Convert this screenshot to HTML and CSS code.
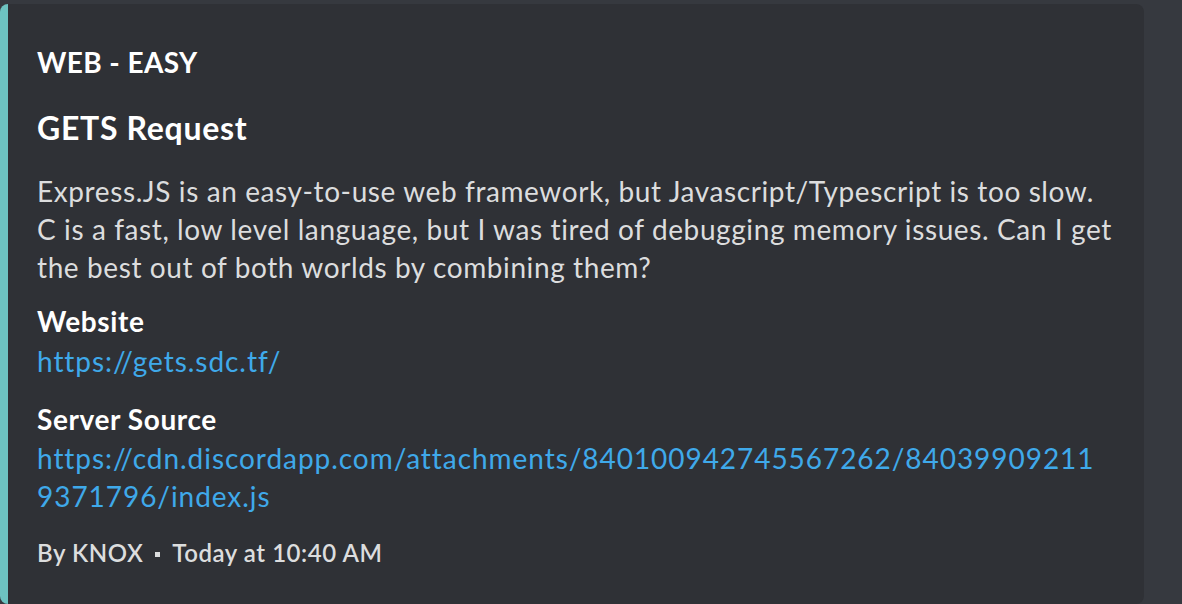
FILE: index.html
```html
<!DOCTYPE html>
<html>
<head>
<meta charset="utf-8">
<link rel="stylesheet" href="styles.css">
</head>
<body>
<div class="embed">
  <div class="author">WEB - EASY</div>
  <div class="title">GETS Request</div>
  <div class="desc">Express.JS is an easy-to-use web framework, but Javascript/Typescript is too slow.<br>C is a fast, low level language, but I was tired of debugging memory issues. Can I get<br>the best out of both worlds by combining them?</div>
  <div class="field">
    <div class="field-name">Website</div>
    <div class="field-value"><a class="link" href="#">https://gets.sdc.tf/</a></div>
  </div>
  <div class="field field-second">
    <div class="field-name">Server Source</div>
    <div class="field-value"><a class="link" href="#">https://cdn.discordapp.com/attachments/840100942745567262/84039909211<br>9371796/index.js</a></div>
  </div>
  <div class="footer">By KNOX<span class="sep"></span>Today at 10:40 AM</div>
</div>
</body>
</html>
```

FILE: styles.css
```css
html, body {
  margin: 0;
  padding: 0;
  background: #36393f;
  height: 604px;
  overflow: hidden;
}
body {
  font-family: Lato, "Open Sans", sans-serif;
  color: #dcddde;
}
.embed {
  box-sizing: border-box;
  margin-top: 4px;
  width: 1144px;
  height: 600px;
  background: #2f3136;
  border-left: 8px solid #6dc3c1;
  border-radius: 8px;
  padding: 40px 24px 0 29px;
}
.author {
  font-size: 28px;
  line-height: 36px;
  font-weight: 700;
  letter-spacing: 0.4px;
  color: #ffffff;
}
.title {
  margin-top: 28px;
  font-size: 32px;
  line-height: 40px;
  font-weight: 700;
  letter-spacing: 0.7px;
  color: #ffffff;
}
.desc {
  margin-top: 24px;
  font-size: 28px;
  line-height: 38px;
  letter-spacing: 0.6px;
  white-space: nowrap;
}
.field {
  margin-top: 16px;
}
.field-second {
  margin-top: 20px;
}
.field-name {
  font-size: 28px;
  line-height: 38px;
  font-weight: 700;
  letter-spacing: 0.6px;
  color: #ffffff;
}
.field-value {
  margin-top: 2px;
  font-size: 28px;
  line-height: 38px;
  white-space: nowrap;
}
.field-second .field-value {
  margin-top: 1px;
}
.link {
  color: #3fa9ea;
  text-decoration: none;
  letter-spacing: 0.95px;
}
.footer {
  margin-top: 22px;
  font-size: 24px;
  line-height: 32px;
  font-weight: 600;
  letter-spacing: 0.55px;
  color: #dcddde;
}
.sep {
  display: inline-block;
  width: 5px;
  height: 5px;
  background: #dcddde;
  margin: 0 12px;
  vertical-align: 5px;
}
```
